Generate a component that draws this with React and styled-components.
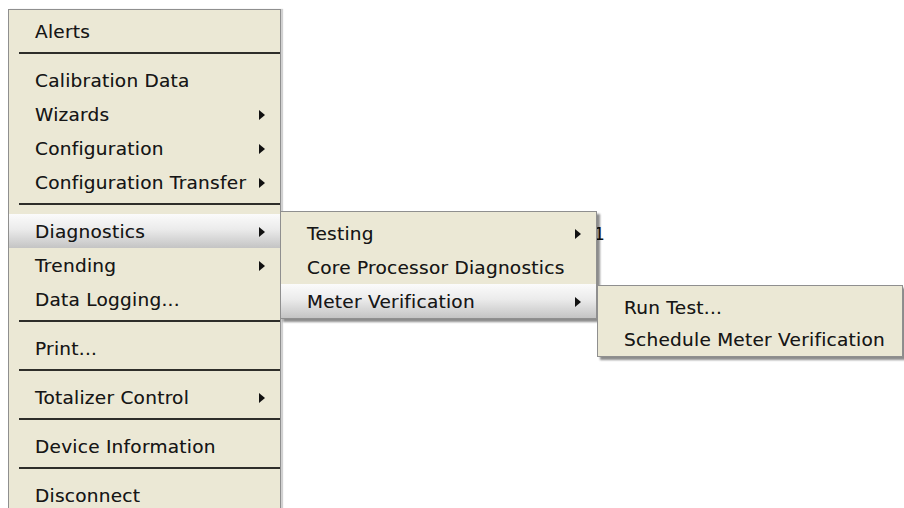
import React from 'react';
import styled, { createGlobalStyle } from 'styled-components';

const GlobalStyle = createGlobalStyle`
  html, body {
    margin: 0;
    background: #ffffff;
    overflow: hidden;
  }
  body {
    font-family: "DejaVu Sans", Verdana, sans-serif;
  }
`;

const Stage = styled.div`
  position: relative;
  width: 904px;
  height: 508px;
  overflow: hidden;
  padding: 9px 0 0 8px;
  box-sizing: border-box;
`;

const Menu = styled.div`
  width: ${(p) => p.$width}px;
  box-sizing: border-box;
  background: #ebe8d5;
  border: 1px solid #8f8f8f;
  padding: ${(p) => p.$padTop}px 0 ${(p) => p.$padBottom}px 0;
  box-shadow: ${(p) => (p.$popup ? '3px 3px 2px rgba(0, 0, 0, 0.45)' : '2px 0 1px rgba(0, 0, 0, 0.18)')};
`;

const Popup = styled(Menu)`
  position: absolute;
  left: ${(p) => p.$left}px;
  top: ${(p) => p.$top}px;
  z-index: ${(p) => p.$z};
`;

const Item = styled.div`
  height: ${(p) => p.$h || 34}px;
  box-sizing: border-box;
  display: flex;
  align-items: center;
  justify-content: space-between;
  padding: 1px 15px 0 26px;
  font-size: 18.5px;
  letter-spacing: 0.25px;
  color: #161616;
  text-shadow: 0 0 0.6px rgba(0, 0, 0, 0.35);
  white-space: nowrap;
  background: ${(p) => (p.$active ? 'linear-gradient(#fbfbfb 0%, #ebebeb 45%, #c4c4c4 100%)' : 'transparent')};
`;

const Arrow = styled.span`
  width: 0;
  height: 0;
  margin-top: 1px;
  border-top: 5px solid transparent;
  border-bottom: 5px solid transparent;
  border-left: 6px solid #111;
`;

const Separator = styled.div`
  height: 15px;
  padding: 4px 0 0 10px;
  box-sizing: border-box;

  &::after {
    content: '';
    display: block;
    height: 2px;
    background: #2e2e2a;
  }
`;

const Behind = styled.span`
  position: absolute;
  left: 594px;
  top: 224px;
  font-size: 17px;
  color: #111;
`;

function MenuItem({ label, arrow, active, h }) {
  return (
    <Item $active={active} $h={h}>
      <span>{label}</span>
      {arrow && <Arrow />}
    </Item>
  );
}

export default function App() {
  return (
    <>
      <GlobalStyle />
      <Stage>
        <Menu $width={273} $padTop={4} $padBottom={0}>
          <MenuItem label="Alerts" />
          <Separator />
          <MenuItem label="Calibration Data" />
          <MenuItem label="Wizards" arrow />
          <MenuItem label="Configuration" arrow />
          <MenuItem label="Configuration Transfer" arrow />
          <Separator />
          <MenuItem label="Diagnostics" arrow active />
          <MenuItem label="Trending" arrow />
          <MenuItem label="Data Logging..." />
          <Separator />
          <MenuItem label="Print..." />
          <Separator />
          <MenuItem label="Totalizer Control" arrow />
          <Separator />
          <MenuItem label="Device Information" />
          <Separator />
          <MenuItem label="Disconnect" />
        </Menu>

        <Behind>1</Behind>

        <Popup $popup $width={317} $left={280} $top={211} $z={2} $padTop={4} $padBottom={0}>
          <MenuItem label="Testing" arrow />
          <MenuItem label="Core Processor Diagnostics" />
          <MenuItem label="Meter Verification" arrow active />
        </Popup>

        <Popup $popup $width={306} $left={597} $top={285} $z={3} $padTop={5} $padBottom={1}>
          <MenuItem label="Run Test..." h={32} />
          <MenuItem label="Schedule Meter Verification" h={32} />
        </Popup>
      </Stage>
    </>
  );
}
